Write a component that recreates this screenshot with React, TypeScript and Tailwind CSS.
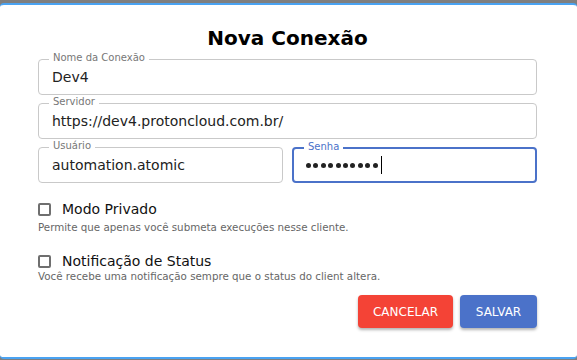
import React from "react"

function Field({ label, value, focused = false, password = false, className = "" }: { label: string; value: string; focused?: boolean; password?: boolean; className?: string }) {
  return (
    <div
      className={
        "relative flex h-[36px] shrink-0 items-center rounded-[4px] text-[14px] text-[#222] " +
        (focused ? "border-2 border-[#4b72c9] px-[12px] " : "border border-[#c9c9c9] px-[13px] ") +
        className
      }
    >
      <span
        className={
          "absolute left-[10px] top-[-8px] bg-white px-[4px] text-[10px] leading-[12px] " +
          (focused ? "text-[#4b72c9]" : "text-[#777]")
        }
      >
        {label}
      </span>
      {password ? (
        <span className="flex items-center gap-[2.4px]">
          {Array.from({ length: 10 }).map((_, i) => (
            <span key={i} className="h-[5px] w-[5px] rounded-full bg-[#222]"></span>
          ))}
          <span className="ml-[1px] h-[18px] w-px bg-black"></span>
        </span>
      ) : (
        <span>{value}</span>
      )}
    </div>
  )
}

function Check({ label, help, helpClass }: { label: string; help: string; helpClass: string }) {
  return (
    <div className="flex flex-col">
      <label className="flex items-center gap-[11px] text-[14px] leading-[18px] text-[#111]">
        <span className="h-[13px] w-[13px] rounded-[2px] border-2 border-[#6f6f6f]"></span>
        {label}
      </label>
      <p className={"text-[10.3px] leading-[12px] text-[#666] " + helpClass}>{help}</p>
    </div>
  )
}

export default function App() {
  return (
    <div
      className="h-[360px] w-[577px] overflow-hidden bg-[#7f7f7f] pt-[3px]"
      style={{ fontFamily: '"DejaVu Sans", Verdana, sans-serif' }}
    >
      <div className="h-[356px] rounded-[4px] border-y-2 border-[#4aa3f2] bg-white pl-[38px] pr-[40px]">
        <h1 className="pt-[21px] text-center text-[20px] font-bold leading-[24px] text-black">Nova Conexão</h1>

        <div className="mt-[9px] flex flex-col gap-[8px]">
          <Field label="Nome da Conexão" value="Dev4" />
          <Field label="Servidor" value="https://dev4.protoncloud.com.br/" />
          <div className="flex gap-[9px]">
            <Field label="Usuário" value="automation.atomic" className="flex-1" />
            <Field label="Senha" value="" focused password className="flex-1" />
          </div>
        </div>

        <div className="mt-[17px] flex flex-col gap-[19px]">
          <Check label="Modo Privado" help="Permite que apenas você submeta execuções nesse cliente." helpClass="mt-[3px]" />
          <Check label="Notificação de Status" help="Você recebe uma notificação sempre que o status do client altera." helpClass="mt-0" />
        </div>

        <div className="mt-[13px] flex justify-end gap-[7px]">
          <button className="h-[33px] w-[95px] rounded-[4px] bg-[#f44336] text-[12px] text-white shadow-[0_2px_3px_rgba(0,0,0,0.3)]">
            CANCELAR
          </button>
          <button className="h-[33px] w-[77px] rounded-[4px] bg-[#4b72c9] text-[12px] text-white shadow-[0_2px_3px_rgba(0,0,0,0.3)]">
            SALVAR
          </button>
        </div>
      </div>
    </div>
  )
}
